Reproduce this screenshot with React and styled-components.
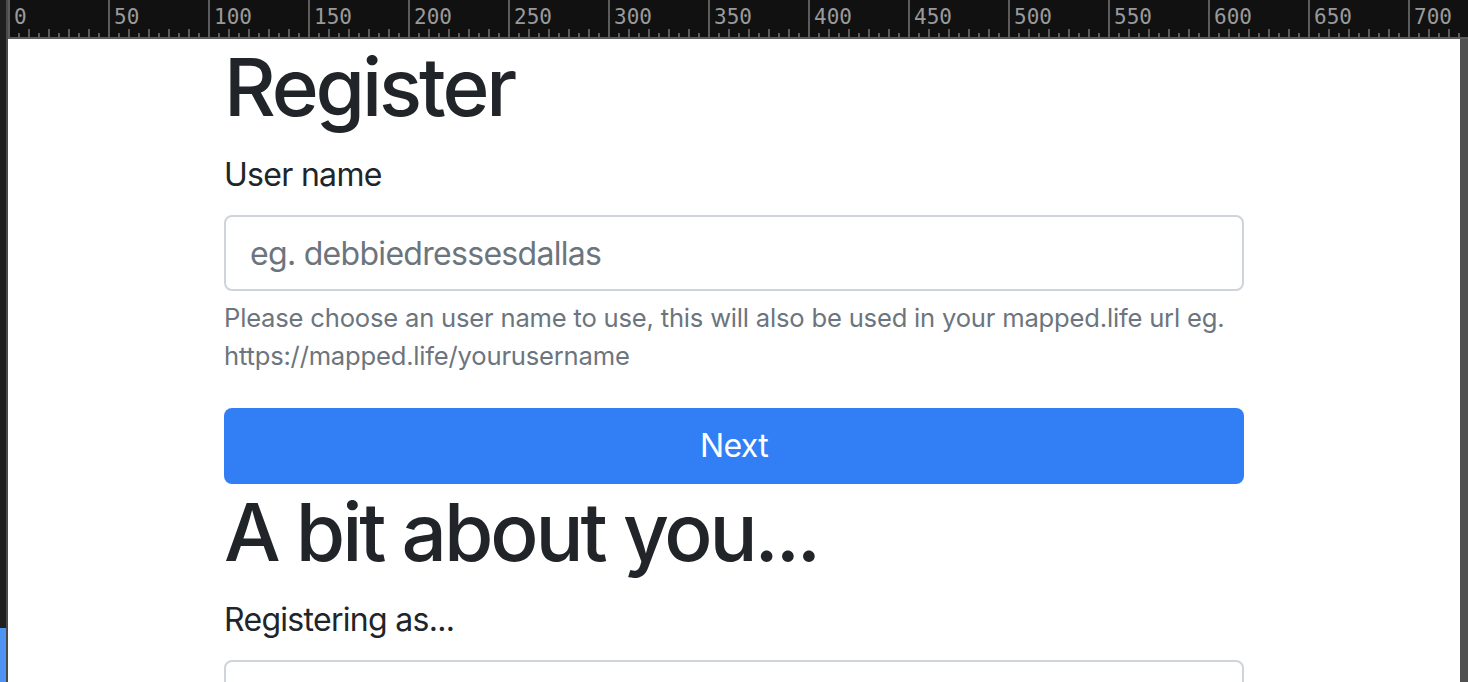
import styled, { createGlobalStyle } from "styled-components"

const GlobalStyle = createGlobalStyle`
  html, body {
    margin: 0;
    padding: 0;
    height: 100%;
    overflow: hidden;
    background: #111111;
  }

  * {
    box-sizing: border-box;
  }
`

const bodyFont = `"Inter", "Liberation Sans", Arial, sans-serif`

const Frame = styled.div`
  display: flex;
  width: 100vw;
  height: 100vh;
  overflow: hidden;
`

const LeftRail = styled.div`
  width: 8px;
  flex-shrink: 0;
  display: flex;
  flex-direction: column;
  background-color: #1f1f1f;
  border-right: 2px solid #4a4a4a;
`

const RailMarker = styled.div`
  margin-top: auto;
  height: 54px;
  background-color: #4f93f3;
`

const Workspace = styled.div`
  flex: 1;
  display: flex;
  flex-direction: column;
  min-width: 0;
`

const Ruler = styled.div`
  height: 39px;
  flex-shrink: 0;
  display: flex;
  overflow: hidden;
  background-color: #111111;
  border-bottom: 2px solid #5c5c5c;
`

const RulerSegment = styled.div`
  width: 100px;
  flex-shrink: 0;
  display: flex;
  flex-direction: column;
  justify-content: space-between;
  border-left: 2px solid #5c5c5c;
  padding-left: 4px;
  background-image:
    repeating-linear-gradient(to right, transparent 0 18px, #5c5c5c 18px 20px),
    repeating-linear-gradient(to right, transparent 0 8px, #5c5c5c 8px 10px);
  background-repeat: no-repeat;
  background-size: 100% 8px, 100% 4px;
  background-position: left bottom, left bottom;

  span {
    margin-top: 6px;
    font-family: "DejaVu Sans Mono", "Liberation Mono", monospace;
    font-size: 21px;
    line-height: 22px;
    color: #9a9a9a;
  }
`

const Viewport = styled.div`
  flex: 1;
  display: flex;
  min-height: 0;
`

const Page = styled.main`
  flex: 1;
  background-color: #ffffff;
  overflow: hidden;
  font-family: ${bodyFont};
  color: #212529;
`

const RightRail = styled.div`
  width: 8px;
  flex-shrink: 0;
  background-color: #505050;
`

const Container = styled.div`
  width: 1020px;
  margin: 0 auto;
  display: flex;
  flex-direction: column;
`

const Heading = styled.h1`
  margin: 0 0 16px;
  font-size: 80px;
  line-height: 96px;
  font-weight: 500;
  letter-spacing: -3.1px;
  color: #212529;
`

const FormGroup = styled.div`
  display: flex;
  flex-direction: column;
  margin-bottom: 32px;
`

const Label = styled.label`
  font-size: 32px;
  line-height: 48px;
  letter-spacing: -0.7px;
  margin-bottom: 16px;
`

const TextInput = styled.input`
  height: 76px;
  padding: 12px 24px;
  border: 2px solid #ced4da;
  border-radius: 8px;
  font-family: ${bodyFont};
  font-size: 32px;
  letter-spacing: -0.7px;
  color: #495057;
  background-color: #ffffff;
  outline: none;

  &::placeholder {
    color: #6c757d;
  }
`

const SelectInput = styled.select`
  height: 76px;
  padding: 12px 24px;
  border: 2px solid #ced4da;
  border-radius: 8px;
  font-family: ${bodyFont};
  font-size: 32px;
  color: #495057;
  background-color: #ffffff;
  appearance: none;
`

const HelpText = styled.small`
  display: block;
  margin-top: 8px;
  font-size: 25.6px;
  line-height: 38.4px;
  letter-spacing: -0.2px;
  color: #6c757d;
`

const PrimaryButton = styled.button`
  width: 100%;
  height: 76px;
  padding: 12px 24px;
  border: none;
  border-radius: 8px;
  background-color: #327ff5;
  color: #ffffff;
  font-family: ${bodyFont};
  font-size: 32px;
  line-height: 48px;
  letter-spacing: -0.7px;
  cursor: pointer;
`

const rulerMarks = Array.from({ length: 15 }, (_, i) => i * 50)

function App() {
  return (
    <>
      <GlobalStyle />
      <Frame>
        <LeftRail>
          <RailMarker />
        </LeftRail>

        <Workspace>
          <Ruler>
            {rulerMarks.map((mark) => (
              <RulerSegment key={mark}>
                <span>{mark}</span>
              </RulerSegment>
            ))}
          </Ruler>

          <Viewport>
            <Page>
              <Container>
                <Heading>Register</Heading>

                <FormGroup>
                  <Label htmlFor="username">User name</Label>
                  <TextInput
                    id="username"
                    type="text"
                    placeholder="eg. debbiedressesdallas"
                  />
                  <HelpText>
                    Please choose an user name to use, this will also be used in your mapped.life url eg. https://mapped.life/yourusername
                  </HelpText>
                </FormGroup>

                <PrimaryButton type="button">Next</PrimaryButton>

                <Heading>A bit about you...</Heading>

                <FormGroup>
                  <Label htmlFor="registering">Registering as...</Label>
                  <SelectInput id="registering" defaultValue="">
                    <option value="">Choose...</option>
                  </SelectInput>
                </FormGroup>
              </Container>
            </Page>
            <RightRail />
          </Viewport>
        </Workspace>
      </Frame>
    </>
  )
}

export default App
